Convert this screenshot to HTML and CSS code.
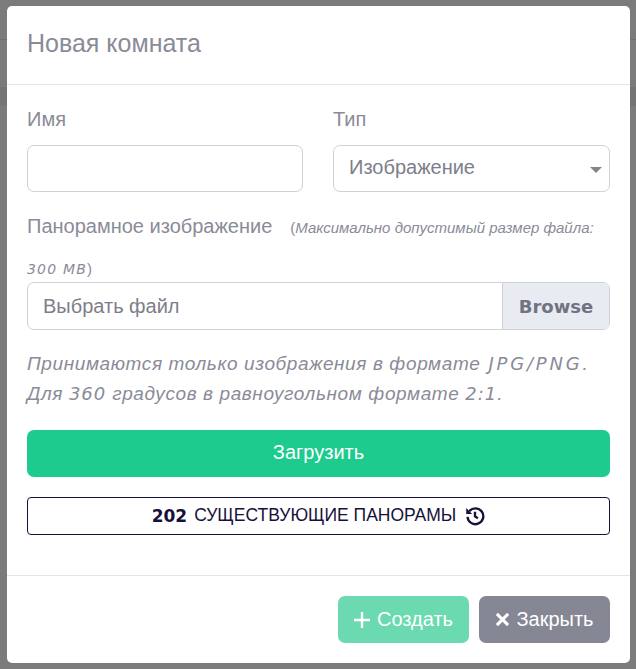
FILE: index.html
```html
<!DOCTYPE html>
<html lang="ru">
<head>
<meta charset="utf-8">
<title>Новая комната</title>
<link rel="stylesheet" href="styles.css">
</head>
<body>
<div class="backdrop-lines">
  <div class="bg-header"></div>
  <div class="bg-band"></div>
</div>
<div class="modal">
  <header class="modal-header"><h5 class="modal-title">Новая комната</h5></header>
  <div class="modal-body">
    <div class="row">
      <div class="field">
        <label class="label">Имя</label>
        <div class="input"></div>
      </div>
      <div class="field">
        <label class="label">Тип</label>
        <div class="input select"><span>Изображение</span><span class="caret"></span></div>
      </div>
    </div>
    <p class="pano-label"><span class="pano-title">Панорамное изображение</span><span class="pano-note">(<i>Максимально допустимый размер файла: <span class="tech">300 MB</span></i>)</span></p>
    <div class="file">
      <span class="file-text">Выбрать файл</span>
      <span class="file-btn tech">Browse</span>
    </div>
    <p class="hint"><i>Принимаются только изображения в формате <span class="tech tech-wide">JPG/PNG</span>.<br>Для <span class="tech">360</span> градусов в равноугольном формате <span class="tech">2:1</span>.</i></p>
    <button class="upload">Загрузить</button>
    <button class="existing"><span class="tech">202</span> СУЩЕСТВУЮЩИЕ ПАНОРАМЫ
      <svg class="history" viewBox="0 0 24 24" width="20" height="20" fill="none" stroke="currentColor" stroke-width="2.8"><path d="M5.2 6.200A9.500 9.500 0 1 1 3 13"/><path d="M12 7v5.500l3.500 2.200"/><path d="M1.500 2.500v7h7z" fill="currentColor" stroke="none"/></svg>
    </button>
  </div>
  <footer class="modal-footer">
    <button class="btn btn-create"><svg viewBox="0 0 16 16" width="16" height="16" stroke="currentColor" stroke-width="2.4"><path d="M8 0v16M0 8h16"/></svg>Создать</button>
    <button class="btn btn-close"><svg viewBox="0 0 16 16" width="15" height="15" stroke="currentColor" stroke-width="3.2"><path d="M2 2l12 12M14 2l-12 12"/></svg>Закрыть</button>
  </footer>
</div>
</body>
</html>
```
FILE: styles.css
```css
* { box-sizing: border-box; }
html, body { margin: 0; height: 100%; }
body {
  background: #7b7b7b;
  font-family: "Liberation Sans", Arial, sans-serif;
  overflow: hidden;
  position: relative;
  padding: 6px 6px 6px 7px;
  color: #8a8b98;
}
.backdrop-lines { position: absolute; inset: 0; }
.bg-header { height: 40px; border-bottom: 1px solid #6f6f6f; }
.bg-band { margin-top: 47px; height: 19px; background: #747474; }
.modal {
  position: relative;
  width: 623px;
  height: 657px;
  background: #fff;
  border-radius: 5px;
  display: flex;
  flex-direction: column;
}
.modal-header {
  height: 79px;
  padding: 0 20px 4px;
  display: flex;
  align-items: center;
  border-bottom: 1px solid #e6e6e9;
}
.modal-title { margin: 0; font-size: 25px; font-weight: 400; color: #8a8b98; }
.modal-body { flex: 1; padding: 0 20px; display: flex; flex-direction: column; }
.row { display: flex; gap: 30px; padding-top: 22px; }
.field { display: flex; flex-direction: column; }
.field:first-child { width: 276px; }
.field:last-child { width: 277px; }
.label { font-size: 20px; line-height: 24px; height: 38px; }
.input {
  height: 47px;
  border: 1px solid #cfd0d8;
  border-radius: 7px;
  background: #fff;
}
.select {
  display: flex;
  align-items: center;
  justify-content: space-between;
  padding: 0 7px 3px 15px;
  font-size: 20px;
  color: #7d7e8a;
}
.caret {
  border-left: 6.500px solid transparent;
  border-right: 6.500px solid transparent;
  border-top: 6px solid #84848a;
  margin-top: 5px;
}
.pano-label { margin: 14px 0 0; line-height: 41px; height: 82px; width: 583px; }
.pano-title { font-size: 20px; margin-right: 18px; }
.pano-note { font-size: 15px; }
.tech { font-family: "DejaVu Sans", sans-serif; }
.pano-note .tech { font-size: 14px; letter-spacing: 1.2px; }
.file {
  margin-top: -6px;
  height: 48px;
  border: 1px solid #cfd0d8;
  border-radius: 7px;
  display: flex;
  align-items: center;
  justify-content: space-between;
  overflow: hidden;
}
.file-text { padding-left: 15px; font-size: 20px; color: #7d7e8a; }
.file-btn {
  align-self: stretch;
  width: 107px;
  background: #e9ebf3;
  border-left: 1px solid #cfd0d8;
  display: flex;
  align-items: center;
  justify-content: center;
  font-size: 18px;
  font-weight: 700;
  color: #6f7382;
  letter-spacing: 0;
}
.hint { margin: 19px 0 0; font-size: 19px; line-height: 30px; letter-spacing: .6px; color: #8a8b98; height: 60px; }
.hint .tech { font-size: 18px; letter-spacing: 1px; }
.hint .tech-wide { letter-spacing: 2.800px; margin-left: 2px; }
button { font-family: inherit; cursor: pointer; }
.upload {
  margin-top: 21px;
  height: 47px;
  padding-bottom: 3px;
  border: 0;
  border-radius: 7px;
  background: #1ccb8d;
  color: #fff;
  font-size: 20px;
}
.existing {
  margin-top: 20px;
  height: 38px;
  padding-bottom: 2px;
  background: #fff;
  border: 1px solid #15113a;
  border-radius: 4px;
  color: #15113a;
  font-size: 17.500px;
  display: flex;
  align-items: center;
  justify-content: center;
  gap: 9px;
}
.existing .tech { font-size: 17px; font-weight: 700; margin-right: -2px; }
.history { flex: none; }
.modal-footer {
  height: 88px;
  border-top: 1px solid #e6e6e9;
  display: flex;
  justify-content: flex-end;
  align-items: flex-start;
  gap: 10px;
  padding: 20px 20px 0 0;
}
.btn {
  height: 47px;
  border: 0;
  border-radius: 7px;
  color: #fff;
  font-size: 20px;
  display: flex;
  align-items: center;
  justify-content: center;
  gap: 6px;
}
.btn-create { width: 131px; background: #6bdab1; gap: 7px; }
.btn-close { width: 131px; background: #858795; }
```
